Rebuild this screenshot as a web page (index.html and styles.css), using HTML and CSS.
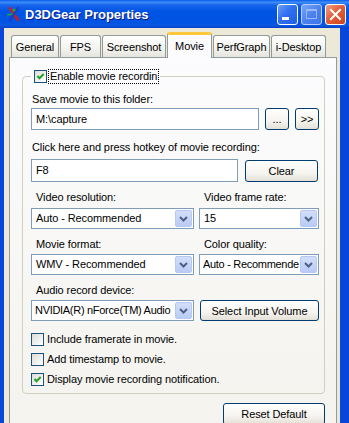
FILE: index.html
```html
<!DOCTYPE html>
<html lang="en">
<head>
  <meta charset="UTF-8" />
  <title>D3DGear Properties</title>
  <link rel="stylesheet" href="styles.css">
</head>
<body>
  <div class="window">
    <!-- Title bar -->
    <div class="titlebar">
      <svg class="app-icon" viewBox="0 0 14 16" width="14" height="16">
        <path d="M3 2 L11 14" stroke="#d21c1c" stroke-width="2.4" stroke-linecap="round"/>
        <path d="M11 2 L3 14" stroke="#1b3fc0" stroke-width="2.4" stroke-linecap="round"/>
        <circle cx="7" cy="4" r="1.6" fill="#22a53a"/>
        <path d="M1 9 L5 8" stroke="#22a53a" stroke-width="1.6" stroke-linecap="round"/>
      </svg>
      <span class="title">D3DGear Properties</span>
      <div class="caption-buttons">
        <span class="cap-btn min"><span class="min-bar"></span></span>
        <span class="cap-btn max"><span class="max-box"></span></span>
        <span class="cap-btn close">
          <svg viewBox="0 0 19 19" width="19" height="19">
            <path d="M5 5 L14 14 M14 5 L5 14" stroke="#fff" stroke-width="2" stroke-linecap="square"/>
          </svg>
        </span>
      </div>
    </div>

    <!-- Dialog body -->
    <div class="frame">
      <div class="tabs">
        <div class="tab" style="width: 48px">General</div>
        <div class="tab" style="width: 41px">FPS</div>
        <div class="tab" style="width: 64px">Screenshot</div>
        <div class="tab active" style="width: 45px">Movie</div>
        <div class="tab" style="width: 57px">PerfGraph</div>
        <div class="tab" style="width: 55px">i-Desktop</div>
      </div>

      <div class="page">
        <fieldset class="group">
          <legend>
            <span class="check checked">
              <svg viewBox="0 0 11 11" width="11" height="11"><path d="M2.5 5 L4.5 7.2 L8.7 3" fill="none" stroke="#21a121" stroke-width="2"/></svg>
            </span>
            <span class="focus">Enable movie recordin</span>
          </legend>

          <div class="label first">Save movie to this folder:</div>
          <div class="row folder-row">
            <div class="textbox">M:\capture</div>
            <button class="btn small">...</button>
            <button class="btn small">&gt;&gt;</button>
          </div>

          <div class="label hotkey-label">Click here and press hotkey of movie recording:</div>
          <div class="row hotkey-row">
            <div class="textbox hotkey">F8</div>
            <button class="btn clear">Clear</button>
          </div>

          <div class="grid">
            <div class="label sub">Video resolution:</div>
            <div class="label sub">Video frame rate:</div>
            <div class="combo"><span class="value">Auto - Recommended</span><span class="arrow"><svg viewBox="0 0 9 6" width="9" height="6"><path d="M1 1 L4.5 4.5 L8 1" fill="none" stroke="#4d6185" stroke-width="2"/></svg></span></div>
            <div class="combo"><span class="value">15</span><span class="arrow"><svg viewBox="0 0 9 6" width="9" height="6"><path d="M1 1 L4.5 4.5 L8 1" fill="none" stroke="#4d6185" stroke-width="2"/></svg></span></div>

            <div class="label sub gap">Movie format:</div>
            <div class="label sub gap">Color quality:</div>
            <div class="combo"><span class="value">WMV - Recommended</span><span class="arrow"><svg viewBox="0 0 9 6" width="9" height="6"><path d="M1 1 L4.5 4.5 L8 1" fill="none" stroke="#4d6185" stroke-width="2"/></svg></span></div>
            <div class="combo"><span class="value tight">Auto - Recommende</span><span class="arrow"><svg viewBox="0 0 9 6" width="9" height="6"><path d="M1 1 L4.5 4.5 L8 1" fill="none" stroke="#4d6185" stroke-width="2"/></svg></span></div>

            <div class="label sub gap wide">Audio record device:</div>
            <div class="combo"><span class="value tight">NVIDIA(R) nForce(TM) Audio</span><span class="arrow"><svg viewBox="0 0 9 6" width="9" height="6"><path d="M1 1 L4.5 4.5 L8 1" fill="none" stroke="#4d6185" stroke-width="2"/></svg></span></div>
            <button class="btn volume">Select Input Volume</button>
          </div>

          <div class="options">
            <div class="option"><span class="check"></span>Include framerate in movie.</div>
            <div class="option"><span class="check"></span>Add timestamp to movie.</div>
            <div class="option"><span class="check checked"><svg viewBox="0 0 11 11" width="11" height="11"><path d="M2.5 5 L4.5 7.2 L8.7 3" fill="none" stroke="#21a121" stroke-width="2"/></svg></span>Display movie recording notification.</div>
          </div>
        </fieldset>

        <div class="footer">
          <button class="btn reset">Reset Default</button>
        </div>
      </div>
    </div>
  </div>
</body>
</html>
```

FILE: styles.css
```css
* {
  box-sizing: border-box;
}

body {
  margin: 0;
  font-family: "Liberation Sans", Arial, sans-serif;
  font-size: 11px;
  letter-spacing: -0.1px;
  color: #000;
  background: #ece9d8;
}

.window {
  width: 349px;
  height: 423px;
  display: flex;
  flex-direction: column;
  overflow: hidden;
}

/* Title bar */
.titlebar {
  flex: none;
  height: 28px;
  display: flex;
  align-items: center;
  padding: 0 3px 0 7px;
  background: linear-gradient(to bottom, #0a5ee8 0%, #3d8df8 8%, #1865ec 18%, #0054e3 40%, #0054e3 80%, #0a58e0 90%, #0441c9 100%);
}

.app-icon {
  margin-right: 4px;
}

.title {
  flex: 1;
  color: #fff;
  font-weight: bold;
  font-size: 13px;
  letter-spacing: 0;
  text-shadow: 1px 1px #0f1a8a;
}

.caption-buttons {
  display: flex;
  gap: 3px;
}

.cap-btn {
  width: 21px;
  height: 21px;
  border: 1px solid #fff;
  border-radius: 3px;
  display: flex;
  background: linear-gradient(135deg, #6c9ffa 0%, #2f6ff0 45%, #1f5fe6 100%);
}

.cap-btn.min .min-bar {
  width: 7px;
  height: 3px;
  background: #fff;
  margin: 12px 0 0 4px;
}

.cap-btn.max {
  background: linear-gradient(135deg, #7aa6f8 0%, #4d82ee 50%, #3d74ea 100%);
  border-color: #b8cdf6;
  align-items: center;
  justify-content: center;
}

.cap-btn.max .max-box {
  width: 11px;
  height: 10px;
  border: 1px solid #9db9f2;
  border-top-width: 2px;
}

.cap-btn.close {
  background: linear-gradient(135deg, #f0a184 0%, #e2603b 45%, #d0411e 100%);
  align-items: center;
  justify-content: center;
}

/* Dialog body */
.frame {
  flex: 1;
  min-height: 0;
  display: flex;
  flex-direction: column;
  background: #ece9d8;
  border-left: 4px solid #0845db;
  border-right: 9px solid #0845db;
  padding: 4px 3px 0 5px;
}

.tabs {
  display: flex;
  align-items: flex-end;
  gap: 1px;
  padding-left: 2px;
  margin-bottom: -1px;
}

.tab {
  height: 22px;
  margin-bottom: 1px;
  border: 1px solid #919b9c;
  border-bottom: none;
  border-radius: 3px 3px 0 0;
  background: linear-gradient(to bottom, #ffffff, #f4f4f0 55%, #e5e4dd);
  text-align: center;
  padding-top: 3px;
  line-height: 16px;
  white-space: nowrap;
}

.tab.active {
  position: relative;
  z-index: 1;
  height: 26px;
  margin-bottom: 0;
  background: #fcfcfe;
  border-top: 3px solid #ffc83c;
  padding-top: 3px;
}

.page {
  flex: 1;
  border: 1px solid #919b9c;
  border-bottom: none;
  background: linear-gradient(to bottom, #fcfcfe, #f4f3ee);
  padding: 0 11px 0 12px;
}

/* Group box */
.group {
  margin: 11px 0 0 0;
  border: 1px solid #d0d0bf;
  border-radius: 4px;
  padding: 9px 5px 0 8px;
  min-width: 0;
}

.group legend {
  display: flex;
  align-items: center;
  gap: 2px;
  height: 15px;
  padding: 0 2px 0 3px;
}

.focus {
  outline: 1px dotted #000;
  outline-offset: 0;
  padding: 0 1px;
  line-height: 13px;
}

.check {
  flex: none;
  width: 13px;
  height: 13px;
  border: 1px solid #1c5180;
  background: linear-gradient(135deg, #dcdcd7, #ffffff);
  display: flex;
}

.label {
  line-height: 13px;
  white-space: nowrap;
}

.label.first {
  padding-left: 1px;
}

.hotkey-label {
  margin-top: 11px;
  padding-left: 1px;
}

.row {
  display: flex;
  align-items: flex-start;
}

.folder-row {
  margin-top: 2px;
  gap: 6px;
}

.hotkey-row {
  margin-top: 5px;
}

.textbox {
  flex: 1;
  height: 22px;
  border: 1px solid #7f9db9;
  background: #fff;
  padding-left: 4px;
  line-height: 20px;
}

.textbox.hotkey {
  height: 23px;
  line-height: 21px;
}

.btn {
  font-family: inherit;
  font-size: 11px;
  letter-spacing: -0.1px;
  color: #000;
  height: 22px;
  border: 1px solid #003c74;
  border-radius: 3px;
  background: linear-gradient(to bottom, #ffffff 0%, #f5f4ef 60%, #e3e0d6 100%);
  padding: 0;
}

.btn.small {
  width: 24px;
}

.btn.clear {
  width: 73px;
  margin: 1px 1px 0 7px;
}

.grid {
  display: grid;
  grid-template-columns: 163px minmax(0, 1fr);
  column-gap: 5px;
  margin-top: 9px;
}

.label.sub {
  padding-left: 5px;
  margin-bottom: 4px;
}

.label.sub.gap {
  margin-top: 9px;
  margin-bottom: 3px;
}

.label.wide {
  grid-column: 1 / 3;
  margin-top: 10px;
  margin-bottom: 2px;
}

.combo {
  min-width: 0;
  height: 21px;
  border: 1px solid #7f9db9;
  background: #fff;
  display: flex;
  align-items: stretch;
}

.combo .value {
  flex: 1;
  min-width: 0;
  padding-left: 4px;
  line-height: 19px;
  white-space: nowrap;
  overflow: hidden;
}

.combo .value.tight {
  padding-left: 3px;
  letter-spacing: -0.3px;
}

.combo .arrow {
  flex: none;
  width: 17px;
  margin: 1px;
  border-radius: 2px;
  border: 1px solid #b7c9f2;
  background: linear-gradient(to bottom, #d3def9, #b9cbf5);
  display: flex;
  align-items: center;
  justify-content: center;
}

.btn.volume {
  height: 21px;
  margin-left: 1px;
}

.options {
  margin-top: 12px;
}

.option {
  display: flex;
  align-items: flex-start;
  gap: 3px;
  height: 20px;
  line-height: 13px;
}

.footer {
  display: flex;
  justify-content: flex-end;
  margin-top: 9px;
}

.btn.reset {
  width: 102px;
  height: 22px;
}
```
